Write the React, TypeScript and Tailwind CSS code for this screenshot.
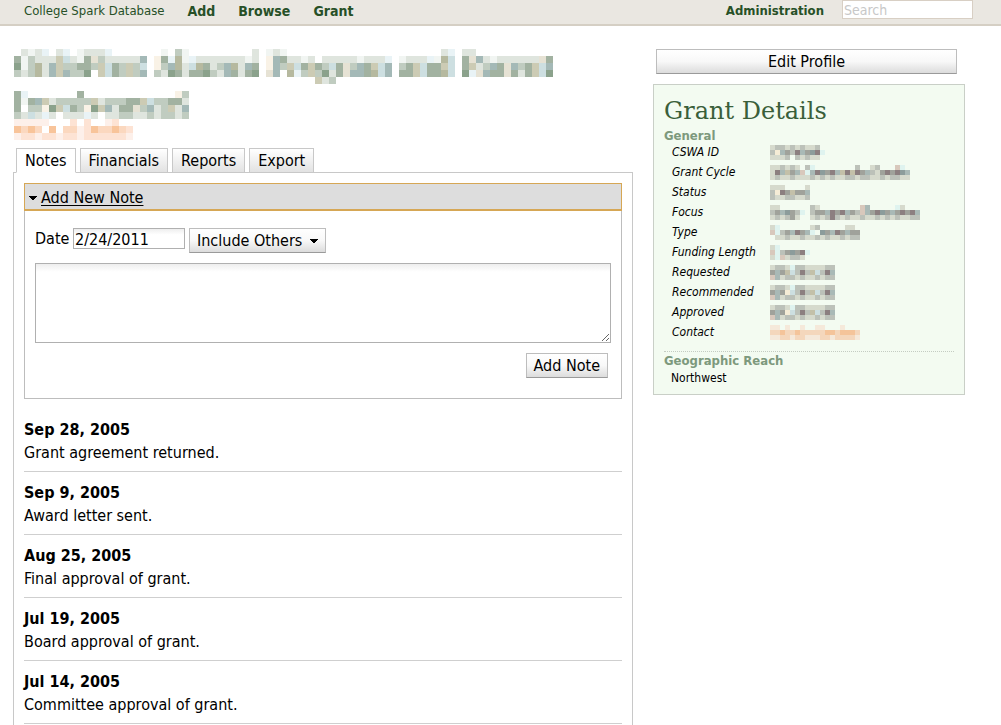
import { useState } from "react";

const palette: Record<string, string> = {
  a: "#f1f5f2", b: "#dfe5de", c: "#c0ccc0", d: "#a2b2a1", e: "#8ba28c", f: "#b6b99f",
  g: "#a4b9b7", h: "#cddfe1", i: "#e9f3f6", j: "#e6e2d4", k: "#f9f2e6", l: "#cccbb4",
  o: "#fdf0ea", p: "#fbd8bf", q: "#f8c49a", r: "#fde3d4",
  "1": "#d6dacd", "2": "#bcc1b9", "3": "#a0a29b", "4": "#8c7f80", "5": "#dff3ef",
  "6": "#a9b9b6", "7": "#f5ecd6", "8": "#c3c0a9", "9": "#8c9c9b", "0": "#d8c8bc",
  x: "#f4c49a", y: "#f4d7bc", z: "#f5e9da",
};

const titleRows = [
  ".babi.bi.abbbi.......a.ca.........b.aba......................bi.bb",
  "dacbbblhbadjcbbbbbg.kdifaibbbbbbbab.kgdbbab.bbbbbabbbi.abbbiafh.djgbabbbbbbjd",
  "eacfbglccddclhdclch.kcgfbhfdbcgfbgd.kgclhdldchdjcgdlhg.cdlhddlh.dlbcgdjgcdlhg",
  "cbcfbglgcce.lhdclcg.cbedbddecbgdbde.jg.ficlcebdjggdfhg.ddlhddfh.eijgddjdbdlhe",
  "...........................................lbc",
  "",
  "di.......d.............kc",
  "dadglbccccclbcccddlhccddb",
  "d.cckelhdckelgbddjcgbclbg",
  "cbhbib.bbbib.bbccbbcbccbc",
];

const subtitleRows = ["ooooo...r.r..or", "qpqp.q.pporqppqpr", "orrorrorrorrrrrro"];

const details: [string, string[]][] = [
  ["CSWA ID", ["1221212112", "27632463945", "1112.21211"]],
  ["Grant Cycle", ["112121.25........2..12...05", "1468360564934684843621343496", "1211211121212112212211212211"]],
  ["Status", ["111....1", "27438336", "21122112"]],
  ["Focus", ["11......21........06.....51", "2369325.2336434632063493634346", "121231..1212421211211212121122"]],
  ["Type", ["15......12.....11", "052364365.93643633", ".11211211212112122"]],
  ["Funding Length", ["15", "05239345", "1501221"]],
  ["Requested", ["1221522111122", "3638h2428h246", "0612212112122"]],
  ["Recommended", ["1221522111122", "3637h2428h246", "0612212112122"]],
  ["Approved", ["1221522111122", "3637h2428h246", "0612212112122"]],
  ["Contact", ["zz.z..z..zz...z", "yyxyyxyyyyyxxyxxxy", "zzyyzyyzzzyyzyyyyz"]],
];

const notes = [
  ["Sep 28, 2005", "Grant agreement returned."],
  ["Sep 9, 2005", "Award letter sent."],
  ["Aug 25, 2005", "Final approval of grant."],
  ["Jul 19, 2005", "Board approval of grant."],
  ["Jul 14, 2005", "Committee approval of grant."],
];

const buttonLook =
  "border border-[#bdbdbd] border-b-[#9a9a9a] bg-linear-to-b from-white via-[#f8f8f8] to-[#dcdcdc]";

function Mosaic({ rows, cell, label }: { rows: string[]; cell: number; label: string }) {
  const cols = Math.max(...rows.map((r) => r.length));
  return (
    <svg
      role="img"
      aria-label={label}
      width={cols * cell}
      height={rows.length * cell}
      shapeRendering="crispEdges"
      className="block"
    >
      {rows.flatMap((row, y) =>
        [...row].map((c, x) =>
          c === "." ? null : (
            <rect key={`${x}-${y}`} x={x * cell} y={y * cell} width={cell} height={cell} fill={palette[c]} />
          ),
        ),
      )}
    </svg>
  );
}

function Caret() {
  return (
    <svg width="8" height="4" viewBox="0 0 8 4" aria-hidden="true" shapeRendering="crispEdges">
      <path d="M0 0h8v1H0zM1 1h6v1H1zM2 2h4v1H2zM3 3h2v1H3z" />
    </svg>
  );
}

function Header() {
  return (
    <header className="flex h-[26px] items-start justify-between border-b-2 border-[#d5cfc4] bg-[#eae7e1] pr-7 pl-6 text-sm leading-[22px] text-[#275027]">
      <nav className="flex gap-[23px] font-bold">
        <a href="#home" className="text-[13px] leading-[22px] font-normal">College Spark Database</a>
        <a href="#add">Add</a>
        <a href="#browse">Browse</a>
        <a href="#grant">Grant</a>
      </nav>
      <div className="flex gap-[18px]">
        <a href="#administration" className="text-[13px] leading-[22px] font-bold">Administration</a>
        <input
          type="search"
          aria-label="Search"
          placeholder="Search"
          className="h-[19px] w-[131px] border border-[#d8cfc4] bg-white px-px text-sm leading-[17px] placeholder:text-[#c8c8c8]"
        />
      </div>
    </header>
  );
}

function Tabs() {
  const [active, setActive] = useState("Notes");
  return (
    <div role="tablist" className="relative -mb-px ml-[3px] flex gap-1">
      {["Notes", "Financials", "Reports", "Export"].map((tab) => (
        <button
          key={tab}
          role="tab"
          aria-selected={tab === active}
          onClick={() => setActive(tab)}
          className={
            "h-[25px] border border-[#c8c8c8] px-2 leading-6 " +
            (tab === active ? "border-b-white bg-white" : "bg-linear-to-b from-white to-[#e2e2e2]")
          }
        >
          {tab}
        </button>
      ))}
    </div>
  );
}

function NoteForm() {
  const [open, setOpen] = useState(true);
  return (
    <section>
      <button
        onClick={() => setOpen(!open)}
        aria-expanded={open}
        className="flex h-7 w-full items-center gap-1 border border-b-2 border-[#d6a755] bg-[#dddddd] pt-0.5 pl-1"
      >
        <Caret />
        <span className="underline underline-offset-2">Add New Note</span>
      </button>
      {open && (
        <form className="border border-t-0 border-[#bdbdbd] px-2.5 pt-[17px] pb-5">
          <div className="flex items-start">
            <label htmlFor="date" className="w-[38px] leading-[22px]">Date</label>
            <input
              id="date"
              defaultValue="2/24/2011"
              className="mr-1 h-[21px] w-28 border border-[#b0b0b0] bg-linear-to-b from-[#eeeeee] to-white to-30% px-px pt-0.5"
            />
            <button type="button" className={`flex h-[25px] items-center gap-2 px-[7px] ${buttonLook}`}>
              Include Others
              <Caret />
            </button>
          </div>
          <textarea
            aria-label="Note"
            className="mt-2.5 block h-20 w-full border border-[#b0b0b0] bg-linear-to-b from-[#eeeeee] to-white to-10% px-0.5"
          />
          <div className="mt-2.5 mr-[3px] flex justify-end">
            <button type="button" className={`h-[25px] px-[7px] leading-[22px] ${buttonLook}`}>
              Add Note
            </button>
          </div>
        </form>
      )}
    </section>
  );
}

function GrantDetails() {
  return (
    <section className="mt-2.5 border border-[#c9cfc7] bg-[#f3fbf1] px-2.5 pt-2.5 pb-2 text-xs">
      <h2 className="mb-px font-['DejaVu_Serif',serif] text-2xl leading-8 text-[#3a5f3a]">Grant Details</h2>
      <h3 className="text-[13px] leading-[15px] font-bold text-[#7d997d]">General</h3>
      <dl className="border-b border-dotted border-[#c4ccc2] pb-2">
        {details.map(([name, rows]) => (
          <div key={name} className="flex h-5 items-start pl-2">
            <dt className="w-[98px] leading-[19px] italic">{name}</dt>
            <dd className="pt-0.5">
              <Mosaic rows={rows} cell={5} label={`${name} hidden`} />
            </dd>
          </div>
        ))}
      </dl>
      <h3 className="text-[13px] leading-[18px] font-bold text-[#7d997d]">Geographic Reach</h3>
      <p className="pl-[7px] leading-4">Northwest</p>
    </section>
  );
}

export default function App() {
  return (
    <div className="h-screen overflow-hidden bg-white font-['DejaVu_Sans_Condensed','Noto_Sans',sans-serif] text-base text-black">
      <Header />
      <div className="flex items-start gap-5 pt-[23px] pr-9 pl-[13px]">
        <main className="min-w-0 flex-1">
          <div className="pl-px">
            <h1><Mosaic rows={titleRows} cell={7} label="Grant title hidden" /></h1>
            <Mosaic rows={subtitleRows} cell={7} label="Organization hidden" />
          </div>
          <div className="pt-2">
            <Tabs />
            <div className="border border-[#c8c8c8] p-2.5">
              <NoteForm />
              <ul className="mt-2.5">
                {notes.map(([date, text]) => (
                  <li key={date} className="border-b border-[#cfcfcf] pt-[9px] pb-[7px] leading-[23px]">
                    <h4 className="font-bold">{date}</h4>
                    <p>{text}</p>
                  </li>
                ))}
              </ul>
            </div>
          </div>
        </main>
        <aside className="w-[312px]">
          <div className="pr-2 pl-[3px]">
            <button className={`block h-[25px] w-full leading-[22px] ${buttonLook}`}>Edit Profile</button>
          </div>
          <GrantDetails />
        </aside>
      </div>
    </div>
  );
}
